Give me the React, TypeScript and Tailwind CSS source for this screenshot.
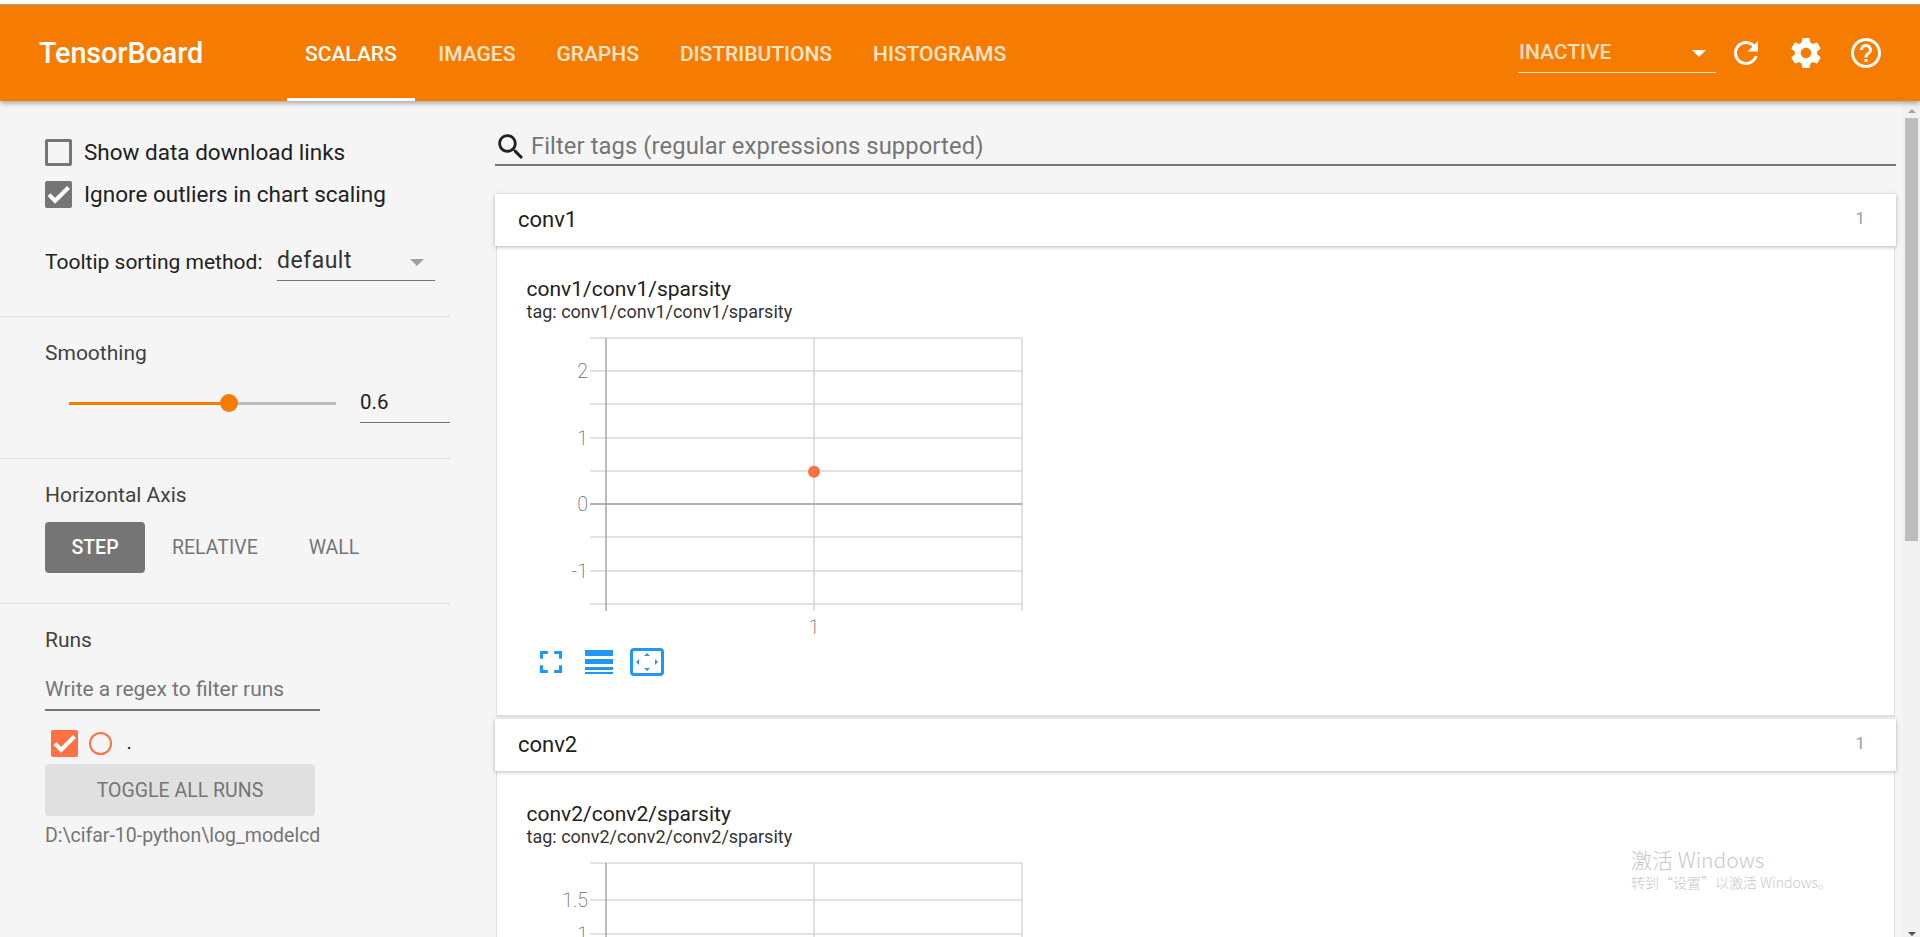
import React from "react";

const P = {
  refresh: "M17.65 6.35C16.2 4.9 14.21 4 12 4c-4.42 0-7.99 3.58-7.99 8s3.57 8 7.99 8c3.73 0 6.84-2.55 7.73-6h-2.08c-.82 2.33-3.04 4-5.65 4-3.31 0-6-2.69-6-6s2.69-6 6-6c1.66 0 3.14.69 4.22 1.78L13 11h7V4l-2.35 2.35z",
  settings: "M19.43 12.98c.04-.32.07-.64.07-.98s-.03-.66-.07-.98l2.11-1.65c.19-.15.24-.42.12-.64l-2-3.46c-.12-.22-.39-.3-.61-.22l-2.49 1c-.52-.4-1.08-.73-1.69-.98l-.38-2.65C14.46 2.18 14.25 2 14 2h-4c-.25 0-.46.18-.49.42l-.38 2.65c-.61.25-1.17.59-1.69.98l-2.49-1c-.23-.09-.49 0-.61.22l-2 3.46c-.13.22-.07.49.12.64l2.11 1.65c-.04.32-.07.65-.07.98s.03.66.07.98l-2.11 1.65c-.19.15-.24.42-.12.64l2 3.46c.12.22.39.3.61.22l2.49-1c.52.4 1.08.73 1.69.98l.38 2.65c.03.24.24.42.49.42h4c.25 0 .46-.18.49-.42l.38-2.65c.61-.25 1.17-.59 1.69-.98l2.49 1c.23.09.49 0 .61-.22l2-3.46c.12-.22.07-.49-.12-.64l-2.11-1.65zM12 15.5c-1.93 0-3.5-1.57-3.5-3.5s1.57-3.5 3.5-3.5 3.5 1.57 3.5 3.5-1.57 3.5-3.5 3.5z",
  help: "M11 18h2v-2h-2v2zm1-16C6.48 2 2 6.48 2 12s4.48 10 10 10 10-4.48 10-10S17.52 2 12 2zm0 18c-4.41 0-8-3.59-8-8s3.59-8 8-8 8 3.59 8 8-3.59 8-8 8zm0-14c-2.21 0-4 1.79-4 4h2c0-1.1.9-2 2-2s2 .9 2 2c0 2-3 1.75-3 5h2c0-2.25 3-2.5 3-5 0-2.21-1.79-4-4-4z",
  search: "M15.5 14h-.79l-.28-.27C15.41 12.59 16 11.11 16 9.5 16 5.91 13.09 3 9.5 3S3 5.91 3 9.5 5.91 16 9.5 16c1.61 0 3.09-.59 4.23-1.57l.27.28v.79l5 4.99L20.49 19l-4.99-5zm-6 0C7.01 14 5 11.99 5 9.5S7.01 5 9.5 5 14 7.01 14 9.5 11.99 14 9.5 14z",
  check: "M9 16.17L4.83 12l-1.42 1.41L9 19 21 7l-1.41-1.41z",
  fit: "M7 14H5v5h5v-2H7v-3zm-2-4h2V7h3V5H5v5zm12 7h-3v2h5v-5h-2v3zM14 5v2h3v3h2V5h-5z",
};

function Icon({ d, className }: { d: string; className: string }) {
  return (
    <svg viewBox="0 0 24 24" className={className} fill="currentColor">
      <path d={d} />
    </svg>
  );
}

function Check() {
  return (
    <svg viewBox="0 0 24 24" className="w-[27px] h-[27px]" fill="white" stroke="white" strokeWidth="1.6">
      <path d={P.check} />
    </svg>
  );
}

function Tab({ label, active }: { label: string; active?: boolean }) {
  return (
    <div
      className={
        active
          ? "h-full mr-[5.5px] px-[18px] flex items-center text-[21px] font-medium text-white border-b-[3px] border-white pt-[7px]"
          : "h-full mr-[5px] px-[18px] flex items-center text-[21px] font-medium text-white/80 border-b-[3px] border-transparent pt-[7px]"
      }
    >
      {label}
    </div>
  );
}

function Chart({ ticks, lines, point, height }: { ticks: [number, string][]; lines: number[]; point?: boolean; height: number }) {
  return (
    <svg width="500" height={height} className="block ml-[29px]" style={{ fontFamily: "Roboto, sans-serif" }}>
      {lines.map((y) => (
        <line key={y} x1="64" x2="496" y1={y} y2={y} stroke="#d9d9d9" strokeWidth="1.3" />
      ))}
      <line x1="288" x2="288" y1="2" y2="275" stroke="#d0d0d0" strokeWidth="1.3" />
      <line x1="496" x2="496" y1="2" y2="275" stroke="#d0d0d0" strokeWidth="1.3" />
      <line x1="80" x2="80" y1="2" y2="275" stroke="#9a9a9a" strokeWidth="1.3" />
      {point && <line x1="64" x2="496" y1="168" y2="168" stroke="#999" strokeWidth="1.6" />}
      {ticks.map(([y, t]) => (
        <text key={t} x="62" y={y + 7} textAnchor="end" fontSize="19.5" fontWeight="200" fill="#6a6a6a">
          {t}
        </text>
      ))}
      {point && (
        <>
          <circle cx="288" cy="135.7" r="6" fill="#ff7043" />
          <text x="288" y="298" textAnchor="middle" fontSize="19.5" fontWeight="200" fill="#6a6a6a">1</text>
        </>
      )}
    </svg>
  );
}

function CardHeader({ name }: { name: string }) {
  return (
    <div className="relative z-10 h-[52px] bg-white flex items-center justify-between pl-[23px] pr-[31px] shadow-[0_1px_4px_rgba(0,0,0,0.28)]">
      <span className="text-[22px] text-[#212121] mt-[-2px]">{name}</span>
      <span className="text-[17px] text-[#9e9e9e] mt-[-3px]">1</span>
    </div>
  );
}

function Title({ name }: { name: string }) {
  return (
    <div className="pl-[29.5px] pt-[32px]">
      <div className="text-[21px] leading-[22px] text-[#212121]">{name}/{name}/sparsity</div>
      <div className="text-[18px] leading-[20px] text-[#333] mt-[2px]">tag: {name}/{name}/{name}/sparsity</div>
    </div>
  );
}

export default function App() {
  return (
    <div className="relative w-[1920px] h-[937px] overflow-hidden bg-white flex flex-col" style={{ fontFamily: "Roboto, 'Noto Sans CJK SC', sans-serif" }}>
      <div className="h-[4px] bg-white" />
      <div className="h-[1px] bg-[#adadad]" />
      <header className="relative z-20 h-[96px] shrink-0 bg-[#f57c00] flex items-center text-white shadow-[0_2px_5px_rgba(0,0,0,0.35)]">
        <div className="w-[287px] pl-[39px] text-[28.8px] font-medium tracking-[-0.1px] pt-[2px]">TensorBoard</div>
        <nav className="flex h-full">
          <Tab label="SCALARS" active />
          <Tab label="IMAGES" />
          <Tab label="GRAPHS" />
          <Tab label="DISTRIBUTIONS" />
          <Tab label="HISTOGRAMS" />
        </nav>
        <div className="ml-auto flex items-center pr-[36px]">
          <div className="relative w-[198px] h-[40px] border-b-[1.5px] border-white/80 flex items-center pl-[1px] pt-[2px] text-[21px] font-medium text-white/75 mt-[-1px]">
            INACTIVE
            <span className="absolute right-[10px] top-[17px] w-0 h-0 border-x-[7px] border-t-[7px] border-x-transparent border-t-white" />
          </div>
          <Icon d={P.refresh} className="w-[36px] h-[36px] ml-[12px]" />
          <Icon d={P.settings} className="w-[36px] h-[36px] ml-[24px]" />
          <Icon d={P.help} className="w-[36px] h-[36px] ml-[24px]" />
        </div>
      </header>

      <div className="flex flex-1 min-h-0 bg-[#f5f5f5]">
        <aside className="w-[450px] shrink-0 text-[#212121]">
          <section className="h-[216px] border-b-[1.5px] border-[#dedede] pl-[45px] pt-[38px]">
            <div className="flex items-center h-[27px]">
              <span className="w-[27px] h-[27px] rounded-[2px] border-[3px] border-[#757575]" />
              <span className="ml-[12px] text-[22.5px] pt-[1px]">Show data download links</span>
            </div>
            <div className="flex items-center h-[27px] mt-[15px]">
              <span className="w-[27px] h-[27px] rounded-[2px] bg-[#757575] flex items-center justify-center">
                <Check />
              </span>
              <span className="ml-[12px] text-[22.5px]">Ignore outliers in chart scaling</span>
            </div>
            <div className="flex items-center mt-[27px] h-[46px]">
              <span className="text-[21px] w-[232px] pt-[9px]">Tooltip sorting method:</span>
              <div className="relative w-[158px] h-[46px] border-b-[1.5px] border-[#757575] text-[23px] pt-[9px] tracking-[0.5px] text-[#333]">
                default
                <span className="absolute right-[11px] top-[24px] w-0 h-0 border-x-[7px] border-t-[7px] border-x-transparent border-t-[#a0a0a0]" />
              </div>
            </div>
          </section>

          <section className="h-[142px] border-b-[1.5px] border-[#dedede] pl-[45px] pt-[23px]">
            <div className="text-[21px] text-[#424242] leading-[26px]">Smoothing</div>
            <div className="flex items-center mt-[13px] h-[44px]">
              <div className="relative ml-[24px] w-[267px] h-[3px] bg-[#bdbdbd] mt-[5px]">
                <div className="h-full w-[160px] bg-[#f57c00]" />
                <span className="absolute left-[151px] top-[-8px] w-[18px] h-[18px] rounded-full bg-[#f57c00]" />
              </div>
              <div className="ml-[24px] w-[90px] h-[44px] border-b-[1.5px] border-[#757575] text-[20.5px] pt-[8px] text-[#212121]">0.6</div>
            </div>
          </section>

          <section className="h-[145px] border-b-[1.5px] border-[#dedede] pl-[45px] pt-[23px]">
            <div className="text-[21px] text-[#424242] leading-[26px]">Horizontal Axis</div>
            <div className="flex items-center mt-[14px] text-[19.5px]">
              <div className="w-[100px] h-[51px] rounded-[4px] bg-[#757575] text-white font-medium flex items-center justify-center">STEP</div>
              <div className="ml-[27px] text-[#757575]">RELATIVE</div>
              <div className="ml-[51px] text-[#757575]">WALL</div>
            </div>
          </section>

          <section className="pl-[45px] pt-[23px]">
            <div className="text-[21px] text-[#424242] leading-[26px]">Runs</div>
            <div className="w-[275px] h-[43px] mt-[15px] border-b-[2px] border-[#757575] text-[21px] text-[#757575] leading-[42px]">Write a regex to filter runs</div>
            <div className="flex items-center h-[27px] mt-[19px] pl-[6px]">
              <span className="w-[27px] h-[27px] rounded-[2px] bg-[#ff7043] flex items-center justify-center">
                <Check />
              </span>
              <span className="ml-[11px] w-[23px] h-[23px] rounded-full border-[2px] border-[#ff7043]" />
              <span className="ml-[15px] text-[15px] font-medium text-black pt-[1px]">.</span>
            </div>
            <div className="w-[270px] h-[52px] mt-[7px] pt-[2px] rounded-[4px] bg-[#e0e0e0] text-[19.5px] text-[#757575] flex items-center justify-center">TOGGLE ALL RUNS</div>
            <div className="mt-[8px] text-[19.5px] text-[#757575] leading-[24px] whitespace-nowrap">D:\cifar-10-python\log_modelcd</div>
          </section>
        </aside>

        <main className="w-[1453px] shrink-0 pl-[45px] pr-[7px] overflow-hidden">
          <div className="h-[65px] border-b-[2px] border-[#757575] flex items-center text-[#757575] text-[23.75px] pt-[28px]">
            <Icon d={P.search} className="w-[34px] h-[34px] text-[#212121] ml-[-1px] shrink-0" />
            <span className="ml-[3px] tracking-[0.1px]">Filter tags (regular expressions supported)</span>
          </div>

          <div className="mt-[28px]">
            <CardHeader name="conv1" />
            <div className="h-[471px] bg-white ml-[1px] mr-[1px] border-x-[1.5px] border-b-[2px] border-[#e0e0e0]">
              <Title name="conv1" />
              <div className="mt-[14px]">
                <Chart
                  height={307}
                  point
                  ticks={[[35, "2"], [102, "1"], [168, "0"], [235, "-1"]]}
                  lines={[2, 35, 68, 102, 135, 201, 235, 268]}
                />
              </div>
              <div className="flex items-center pl-[35px] text-[#2196f3]">
                <Icon d={P.fit} className="w-[38px] h-[38px]" />
                <svg viewBox="0 0 28 24" className="w-[28px] h-[24px] ml-[15px]" fill="currentColor">
                  <rect x="0" y="0" width="28" height="6" />
                  <rect x="0" y="9" width="28" height="5" />
                  <rect x="0" y="17" width="28" height="3" />
                  <rect x="0" y="22" width="28" height="2" />
                </svg>
                <svg viewBox="0 0 34 28" className="w-[34px] h-[28px] ml-[17px]" fill="currentColor">
                  <rect x="1.5" y="1.5" width="31" height="25" rx="2.5" fill="none" stroke="currentColor" strokeWidth="3" />
                  <path d="M17 5l3 3h-6zM17 23l-3-3h6zM6 14l3-3v6zM28 14l-3 3v-6z" />
                </svg>
              </div>
            </div>
          </div>

          <div className="mt-[2px]">
            <CardHeader name="conv2" />
            <div className="h-[400px] bg-white ml-[1px] mr-[1px] border-x-[1.5px] border-[#e0e0e0]">
              <Title name="conv2" />
              <div className="mt-[14px]">
                <Chart height={120} ticks={[[39, "1.5"], [73, "1"]]} lines={[2, 39, 73]} />
              </div>
            </div>
          </div>
        </main>

        <div className="w-[17px] shrink-0 bg-[#f1f1f1] flex flex-col items-center relative pt-[8px]">
          <span className="w-0 h-0 border-x-[4px] border-b-[4px] border-x-transparent border-b-[#a3a3a3]" />
          <div className="w-[13px] h-[423px] mt-[5px] bg-[#bdbdbd]" />
          <span className="mt-auto mb-[1px] w-0 h-0 border-x-[4px] border-t-[4px] border-x-transparent border-t-[#505050]" />
        </div>
      </div>

      <div className="absolute left-[1631px] top-[846px] z-30 text-[#c8c8c8] font-light pointer-events-none" style={{ fontFamily: "'Noto Sans CJK SC', sans-serif" }}>
        <div className="text-[21px] leading-[26px]">激活 Windows</div>
        <div className="text-[14px] leading-[20px]">转到“设置”以激活 Windows。</div>
      </div>
    </div>
  );
}
